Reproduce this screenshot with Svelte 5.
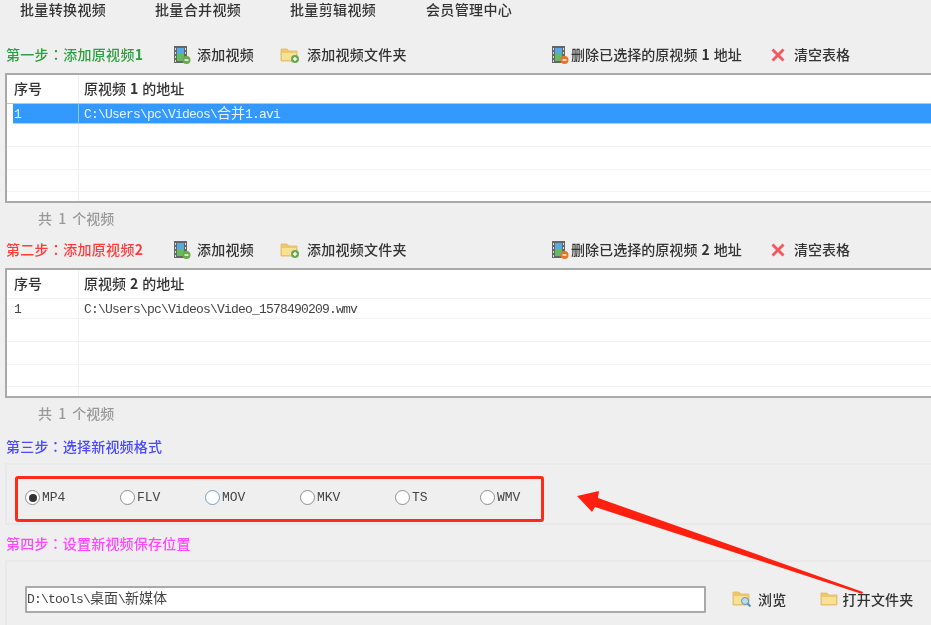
<script>
  const nav = ["批量转换视频", "批量合并视频", "批量剪辑视频", "会员管理中心"];
  const formats = [
    { name: "MP4", width: 95, checked: true },
    { name: "FLV", width: 85 },
    { name: "MOV", width: 95, focus: true },
    { name: "MKV", width: 95 },
    { name: "TS", width: 85 },
    { name: "WMV", width: 45 },
  ];
  const steps = [
    { n: 1, cls: "green", label: "第一步：添加原视频", selected: true,
      path: ["C:\\Users\\pc\\Videos\\", "合并", "1.avi"] },
    { n: 2, cls: "red", label: "第二步：添加原视频", selected: false,
      path: ["C:\\Users\\pc\\Videos\\Video_1578490209.wmv"] },
  ];
</script>

{#snippet film(badge)}
  <svg class="icon" width="18" height="20" viewBox="0 0 18 20">
    <rect x="1" y="1" width="13" height="17" fill="#666" />
    <rect x="4" y="3" width="7" height="6" fill="#58a9dc" />
    <rect x="4" y="9" width="7" height="7" fill="#63bb63" />
    <path d="M2 3h1v2H2zM2 7h1v2H2zM2 11h1v2H2zM2 15h1v2H2zM12 3h1v2h-1zM12 7h1v2h-1zM12 11h1v2h-1z" fill="#ddd" />
    <circle cx="13.5" cy="15" r="4" fill={badge} />
    <rect x="11.5" y="14.3" width="4" height="1.4" fill="#fff" />
  </svg>
{/snippet}

{#snippet folder(plus)}
  <svg class="icon" width="20" height="18" viewBox="0 0 20 18">
    <path d="M1 3h6l2 2h8v10H1z" fill="#eec768" stroke="#e2c17a" />
    <rect x="2" y="7" width="14" height="7" fill="#f9e194" />
    {#if plus}
      <circle cx="15" cy="13" r="4" fill="#6aa84f" />
      <rect x="13" y="12.3" width="4" height="1.4" fill="#fff" />
      <rect x="14.3" y="11" width="1.4" height="4" fill="#fff" />
    {/if}
  </svg>
{/snippet}

<div class="page">
  <nav class="nav">
    {#each nav as item}
      <span>{item}</span>
    {/each}
  </nav>

  {#each steps as step}
    <div class="toolbar">
      <span class="step {step.cls}">{step.label}<b>{step.n}</b></span>
      <span class="tool">{@render film("#6aa84f")}<span>添加视频</span></span>
      <span class="tool">{@render folder(true)}<span class="nudge">添加视频文件夹</span></span>
      <span class="tool tight">{@render film("#e8742a")}<span>删除已选择的原视频<b class="num">{step.n}</b>地址</span></span>
      <span class="tool wide">
        <svg class="icon" width="16" height="16" viewBox="0 0 16 16">
          <path d="M1.5 3.5l2-2 4.5 4.5 4.5-4.5 2 2-4.5 4.5 4.5 4.5-2 2-4.5-4.5-4.5 4.5-2-2 4.5-4.5z" fill="#f4575c" />
        </svg>
        <span>清空表格</span>
      </span>
    </div>

    <div class="table">
      <div class="row head" class:ruled={step.selected}>
        <span>序号</span>
        <span>原视频<b class="num">{step.n}</b>的地址</span>
      </div>
      <div class="row first" class:selected={step.selected}>
        <span class="mono">1</span>
        <span class="mono">{#each step.path as part, i}{#if i === 1}<span class="cjk">{part}</span>{:else}{part}{/if}{/each}</span>
      </div>
      <div class="row r23"><span></span><span></span></div>
      <div class="row r23"><span></span><span></span></div>
      <div class="row r22"><span></span><span></span></div>
      <div class="row r9"><span></span><span></span></div>
    </div>

    <div class="count">共 1 个视频</div>
  {/each}

  <div class="step-line blue">第三步：选择新视频格式</div>
  <div class="panel formats">
    <div class="redbox">
      {#each formats as f}
        <label class="radio" style="width: {f.width}px">
          <span class="dot" class:checked={f.checked} class:focus={f.focus}></span>
          <span class="mono">{f.name}</span>
        </label>
      {/each}
    </div>
  </div>

  <div class="step-line pink">第四步：设置新视频保存位置</div>
  <div class="panel output">
    <div class="input mono">D:\tools\<span class="cjk">桌面</span>\<span class="cjk">新媒体</span></div>
    <span class="tool browse">
      <svg class="icon" width="20" height="18" viewBox="0 0 20 18">
        <path d="M1 2h6l2 2h8v11H1z" fill="#eec768" stroke="#e2c17a" />
        <rect x="2" y="6" width="13" height="8" fill="#f9e194" />
        <circle cx="13" cy="11" r="3.5" fill="#bcdcf2" stroke="#5b93c2" />
        <path d="M15.5 13.5l3 3" stroke="#5b93c2" stroke-width="2" />
      </svg>
      <span>浏览</span>
    </span>
    <span class="tool open">{@render folder(false)}<span>打开文件夹</span></span>
  </div>

  <svg class="arrow" width="931" height="625" viewBox="0 0 931 625">
    <polygon points="577,496 599,491 598,498 863,592 862,594 595,507 592,512" fill="#ff2010" />
  </svg>
</div>

<style>
  :global(body) {
    background: #efefef;
  }
  .page {
    position: relative;
    width: 931px;
    height: 625px;
    overflow: hidden;
    background: #efefef;
    color: #333;
    font-family: "Noto Sans CJK SC", "Noto Sans", sans-serif;
    font-size: 14px;
    font-weight: 500;
    filter: blur(0.6px);
  }
  .nav {
    display: grid;
    grid-template-columns: 135px 135px 136px 1fr;
    height: 20px;
    margin-bottom: 24px;
    padding-left: 20px;
    line-height: 18px;
    letter-spacing: 0.35px;
    white-space: nowrap;
  }
  .toolbar {
    display: grid;
    grid-template-columns: 173px 107px 271px 219px 1fr;
    align-items: center;
    height: 22px;
    margin-bottom: 7px;
    white-space: nowrap;
  }
  .toolbar span span {
    padding-bottom: 2px;
  }
  .step {
    padding-left: 6px;
    padding-bottom: 2px;
    font-family: "Noto Sans CJK TC", sans-serif;
    letter-spacing: 0.3px;
  }
  .green {
    color: #2f9e3f;
  }
  .red {
    color: #ff3b3b;
  }
  .blue {
    color: #4a4aff;
  }
  .pink {
    color: #ff48ff;
  }
  .tool {
    display: flex;
    align-items: center;
    gap: 6px;
    letter-spacing: 0.25px;
  }
  .nudge {
    margin-left: 1px;
  }
  .tight {
    gap: 2px;
    letter-spacing: 0.05px;
  }
  .wide {
    gap: 8px;
    letter-spacing: 0;
  }
  .num {
    padding: 0 4px;
  }
  .icon {
    flex: none;
  }
  .table {
    height: 130px;
    box-sizing: border-box;
    margin-left: 5px;
    border: 2px solid #a9a9a9;
    border-right: none;
    background: #fff;
    overflow: hidden;
  }
  .row {
    display: grid;
    grid-template-columns: 72px 1fr;
    border-bottom: 1px solid #f3f3f3;
    box-sizing: border-box;
  }
  .row > span:first-child {
    border-right: 1px solid #f0f0f0;
    padding-left: 7px;
  }
  .row > span:last-child {
    padding-left: 5px;
  }
  .head {
    height: 29px;
    line-height: 27px;
  }
  .ruled {
    border-bottom: 1px solid #c4c4c4;
  }
  .first {
    height: 20px;
    line-height: 22px;
    color: #444;
  }
  .selected {
    background: #3399ff;
    color: #e8f3ff;
    margin-left: 6px;
    grid-template-columns: 66px 1fr;
    border-bottom-color: #a9d3ff;
  }
  .selected > span:first-child {
    padding-left: 1px;
    border-right-color: #8cc4fb;
  }
  .r23 {
    height: 23px;
  }
  .r22 {
    height: 22px;
  }
  .r9 {
    height: 9px;
    border-bottom: none;
  }
  .mono {
    font-family: "Liberation Mono", "Noto Sans CJK SC", monospace;
    font-size: 13px;
    font-weight: 400;
    letter-spacing: -0.8px;
    white-space: pre;
  }
  .cjk {
    font-family: "Noto Sans CJK SC", sans-serif;
    font-size: 14px;
    line-height: 1;
    letter-spacing: 0;
  }
  .count {
    height: 32px;
    margin-bottom: 4px;
    padding-left: 38px;
    line-height: 30px;
    color: #999;
    word-spacing: 3px;
  }
  .step-line {
    height: 22px;
    padding-left: 6px;
    font-family: "Noto Sans CJK TC", sans-serif;
    line-height: 20px;
    letter-spacing: 0.2px;
  }
  .step-line.blue {
    margin: 6px 0 5px;
  }
  .step-line.pink {
    margin: 2px 0 5px;
  }
  .panel {
    margin-left: 5px;
    border: 2px solid #e9e9e9;
    border-right: none;
    box-sizing: border-box;
  }
  .formats {
    height: 62px;
    margin-bottom: 8px;
    padding: 11px 0 0 8px;
  }
  .redbox {
    display: flex;
    align-items: center;
    box-sizing: border-box;
    width: 529px;
    height: 46px;
    padding: 0 0 3px 7px;
    border: 3px solid #ff2a1a;
    border-radius: 3px;
  }
  .radio {
    display: flex;
    flex: none;
    align-items: center;
    gap: 2px;
    color: #444;
  }
  .radio .mono {
    letter-spacing: 0;
  }
  .dot {
    display: block;
    position: relative;
    box-sizing: border-box;
    width: 15px;
    height: 15px;
    border: 1.5px solid #8f8f8f;
    border-radius: 50%;
    background: #fff;
  }
  .focus {
    border-color: #6f9fc4;
  }
  .checked::after {
    content: "";
    position: absolute;
    inset: 2.5px;
    border-radius: 50%;
    background: #333;
  }
  .output {
    display: flex;
    align-items: flex-start;
    height: 90px;
    padding: 24px 0 0 18px;
  }
  .input {
    box-sizing: border-box;
    width: 681px;
    height: 27px;
    padding-left: 0;
    border: 2px solid #a9a9a9;
    border-radius: 1px;
    background: #fff;
    line-height: 24px;
    color: #444;
  }
  .browse {
    margin: 3px 0 0 26px;
    gap: 6px;
  }
  .open {
    margin: 3px 0 0 33px;
    gap: 3px;
    letter-spacing: 0.2px;
    white-space: nowrap;
  }
  .arrow {
    position: absolute;
    left: 0;
    top: 0;
    pointer-events: none;
  }
</style>
